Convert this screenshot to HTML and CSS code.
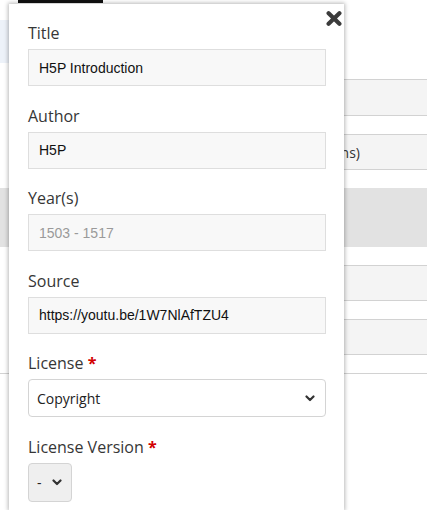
FILE: index.html
```html
<!DOCTYPE html>
<html>
<head>
<meta charset="utf-8">
<link rel="stylesheet" href="styles.css">
</head>
<body>
<div class="page">
  <div class="tabbar"></div>
  <div class="hero"><div class="blue-btn"></div></div>
  <div class="table">
    <div class="row striped r36"></div>
    <div class="row r19"></div>
    <div class="row striped r35"><span class="cell-text">Copyright and license (2 options)</span></div>
    <div class="row r19"></div>
  </div>
  <div class="band"></div>
  <div class="gap18"></div>
  <div class="table">
    <div class="row striped r35"></div>
    <div class="row r19"></div>
    <div class="row striped r35"></div>
    <div class="row r19"></div>
  </div>
  <div class="endline"></div>
</div>

<div class="popup">
  <svg class="close" width="16" height="15" viewBox="0 0 16 15">
    <path d="M2.6 2.3 L13.4 12.7 M13.4 2.3 L2.6 12.7" stroke="#3b3b3b" stroke-width="4.2" stroke-linecap="round" fill="none"/>
  </svg>
  <div class="field">
    <div class="label">Title</div>
    <div class="input">H5P Introduction</div>
  </div>
  <div class="field">
    <div class="label">Author</div>
    <div class="input">H5P</div>
  </div>
  <div class="field">
    <div class="label">Year(s)</div>
    <div class="input placeholder">1503 - 1517</div>
  </div>
  <div class="field">
    <div class="label">Source</div>
    <div class="input">https://youtu.be/1W7NlAfTZU4</div>
  </div>
  <div class="field">
    <div class="label">License <span class="req">*</span></div>
    <div class="select">
      <span>Copyright</span>
      <svg class="chev" width="10" height="7" viewBox="0 0 10 7"><path d="M1.5 1.5 L5 5 L8.5 1.5" stroke="#333" stroke-width="2.2" fill="none" stroke-linecap="round" stroke-linejoin="round"/></svg>
    </div>
  </div>
  <div class="field">
    <div class="label">License Version <span class="req">*</span></div>
    <div class="select small">
      <span>-</span>
      <svg class="chev" width="10" height="7" viewBox="0 0 10 7"><path d="M1.5 1.5 L5 5 L8.5 1.5" stroke="#333" stroke-width="2.2" fill="none" stroke-linecap="round" stroke-linejoin="round"/></svg>
    </div>
  </div>
</div>
</body>
</html>
```
FILE: styles.css
```css
html, body {
  margin: 0;
  padding: 0;
  overflow: hidden;
  background: #fff;
}
body {
  width: 427px;
  height: 510px;
  position: relative;
  font-family: "Open Sans", sans-serif;
}
.page {
  display: flex;
  flex-direction: column;
}
.tabbar {
  margin-left: 18px;
  width: 85px;
  height: 3px;
  background: #111;
}
.hero {
  height: 76px;
}
.blue-btn {
  margin-top: 17px;
  width: 9px;
  height: 43px;
  background: #edf2f9;
}
.table {
  margin-left: 20px;
  display: flex;
  flex-direction: column;
}
.row {
  border-top: 1px solid #d2d2d2;
  box-sizing: border-box;
  display: flex;
  align-items: center;
}
.striped { background: #f4f4f4; }
.r36 { height: 36px; }
.r35 { height: 35px; }
.r19 { height: 19px; }
.cell-text {
  width: 340px;
  text-align: right;
  font-size: 14px;
  color: #333;
  white-space: nowrap;
  overflow: hidden;
}
.band {
  height: 59px;
  background: #e2e2e2;
}
.gap18 { height: 18px; }
.endline {
  height: 1px;
  background: #d2d2d2;
}

.popup {
  position: absolute;
  left: 9px;
  top: 4px;
  bottom: 0;
  width: 335px;
  box-sizing: border-box;
  padding: 17px 18px 0 19px;
  background: #fff;
  box-shadow: 0 0 4px 1px rgba(0,0,0,0.28);
  overflow: hidden;
}
.close {
  position: absolute;
  top: 7px;
  right: 2px;
}
.field {
  display: flex;
  flex-direction: column;
  gap: 4px;
  margin-bottom: 17.5px;
}
.label {
  font-size: 16px;
  line-height: 24px;
  color: #363636;
}
.req {
  color: #d20000;
  font-weight: 700;
}
.input {
  height: 37px;
  box-sizing: border-box;
  border: 1px solid #dedede;
  background: #f8f8f8;
  padding: 0 10px;
  display: flex;
  align-items: center;
  font-family: "Liberation Sans", Arial, sans-serif;
  font-size: 14px;
  color: #111;
}
.placeholder { color: #9a9a9a; }
.select {
  height: 38px;
  box-sizing: border-box;
  border: 1px solid #d4d4d4;
  border-radius: 4px;
  background: #fff;
  padding: 0 10px 0 8px;
  display: flex;
  align-items: center;
  justify-content: space-between;
  font-size: 14px;
  color: #222;
}
.select.small {
  width: 44px;
  height: 39px;
  background: #efefef;
  padding: 0 9px 0 8px;
}
.chev { display: block; }
```
